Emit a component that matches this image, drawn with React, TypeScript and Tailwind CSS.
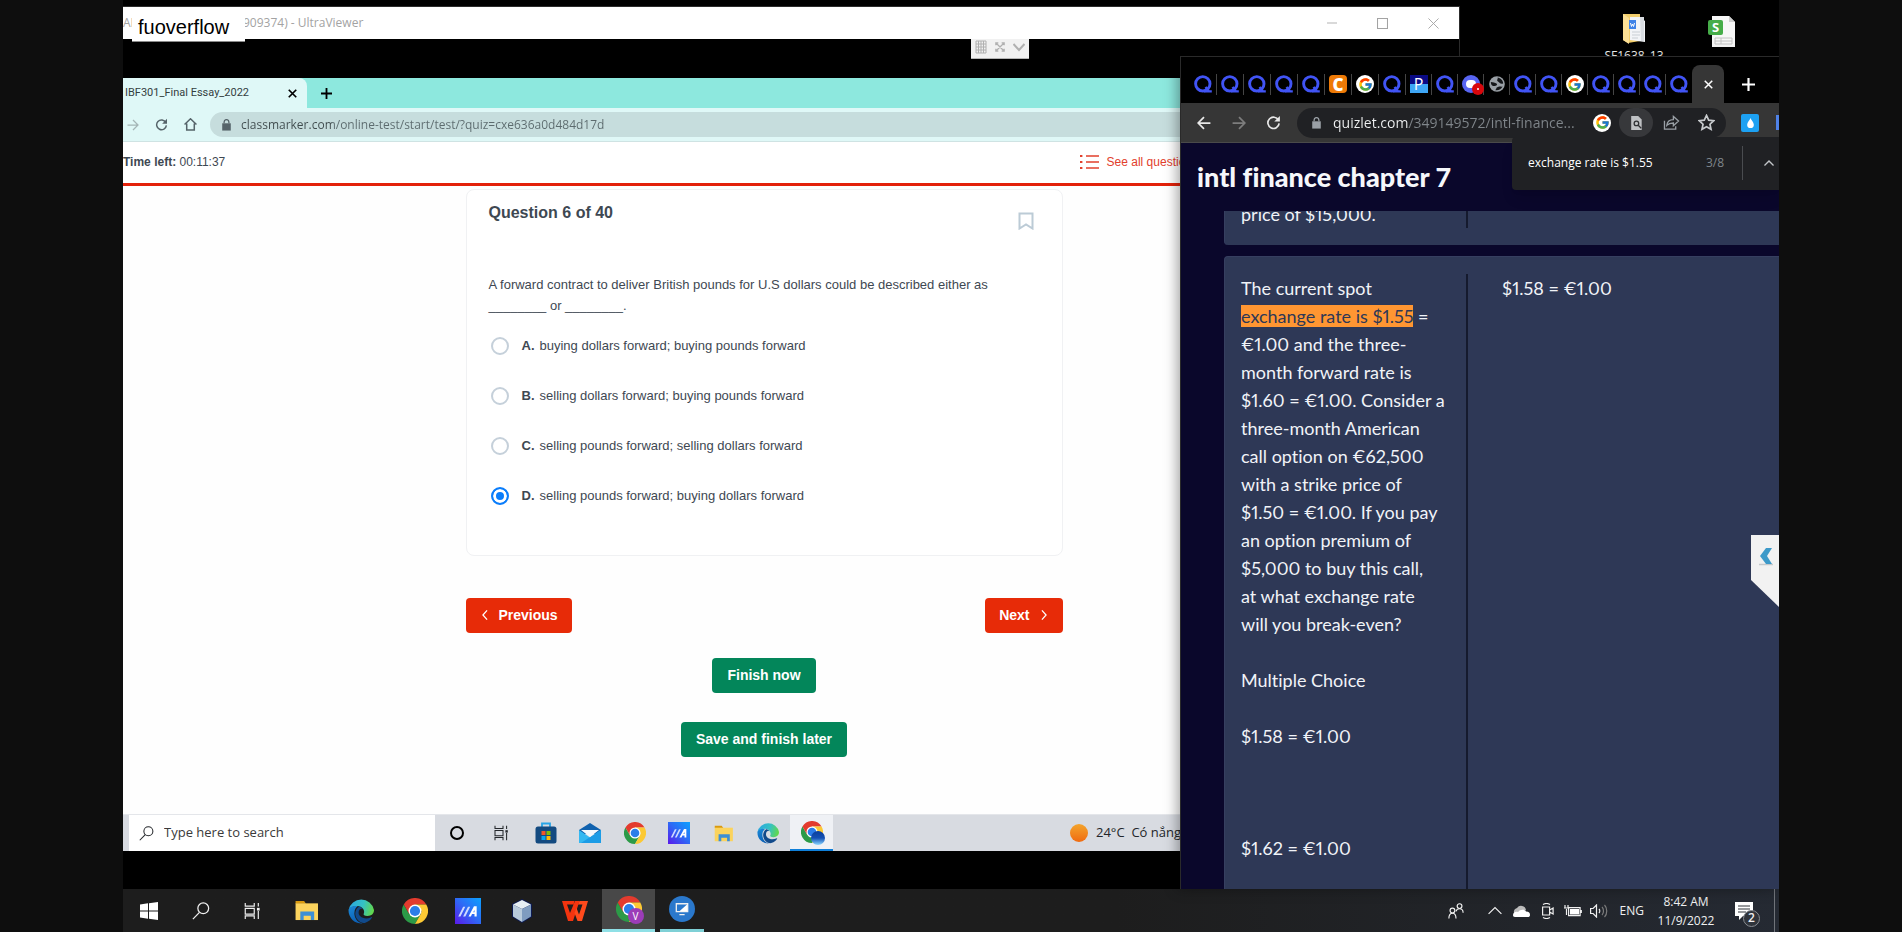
import type { ReactNode } from "react";
import { FcGoogle } from "react-icons/fc";

const ui = "font-['Open_Sans','Noto_Sans',sans-serif]";

function Icon({ size = "size-4", box = "0 0 24 24", children }: { size?: string; box?: string; children: ReactNode }) {
  return (
    <svg viewBox={box} className={`${size} shrink-0`} fill="none" stroke="currentColor" strokeWidth="2" aria-hidden="true">
      {children}
    </svg>
  );
}

function ChromeLogo({ size, badge }: { size: string; badge?: "v" | "edge" }) {
  return (
    <span className="relative flex">
      <svg viewBox="0 0 48 48" className={`${size} shrink-0`} aria-hidden="true">
        <path d="M24 24 3.2 12A24 24 0 0 1 44.8 12L24 12Z" fill="#e33b2e" />
        <path d="M3.2 12A24 24 0 0 0 24 48L34.4 30 24 24 13.6 30Z" fill="#2c9a47" />
        <path d="M44.8 12A24 24 0 0 1 24 48L34.4 30 36 24 24 12Z" fill="#fcc934" />
        <path d="M3.2 12 13.6 30 14 22 24 12Z" fill="#e33b2e" />
        <circle cx="24" cy="24" r="12" fill="#fff" />
        <circle cx="24" cy="24" r="9.4" fill="#2b7de9" />
      </svg>
      {badge === "v" && (
        <span className="absolute -right-0.5 -bottom-0.5 flex size-4 items-center justify-center rounded-full bg-[#9c3cb8] text-[10px] leading-none text-white">V</span>
      )}
      {badge === "edge" && <span className="absolute -right-0.5 -bottom-0.5 size-3.5 rounded-full bg-linear-to-b from-[#0b3f9c] via-[#1450b4] to-[#8fd8ff]" />}
    </span>
  );
}

function EdgeLogo({ size, id }: { size: string; id: string }) {
  return (
    <svg viewBox="0 0 48 48" className={size} aria-hidden="true">
      <defs>
        <linearGradient id={`${id}-top`} x1="0" x2="1" y1="0.3" y2="0.5">
          <stop offset="0" stopColor="#2aa8e0" />
          <stop offset="0.55" stopColor="#35c1c4" />
          <stop offset="1" stopColor="#62d84c" />
        </linearGradient>
        <linearGradient id={`${id}-low`} x1="0" x2="0.4" y1="0" y2="1">
          <stop offset="0" stopColor="#1b8ad8" />
          <stop offset="1" stopColor="#0c5fb4" />
        </linearGradient>
      </defs>
      <path d="M1 22A24 24 0 0 1 48 22C48 29 43 33 36 33 30 33 28 31 29 29 31 26 30 17 20 15 11 14 3 18 1 22Z" fill={`url(#${id}-top)`} />
      <path d="M1 22C3 15 12 14 18 15 14 17 11 23 12 31 13 40 20 46 27 47A24 24 0 0 1 1 22Z" fill={`url(#${id}-low)`} />
      <path d="M20 16C14 20 11 29 16 38 20 45 28 47 31 46 38 44 43 39 44 36 44 35 43 35 42 36 30 41 17 34 20 24 21 20 24 19 27 20 25 17 22 16 20 16Z" fill="#114a8b" />
    </svg>
  );
}

function FolderLogo({ size }: { size: string }) {
  return (
    <svg viewBox="0 0 24 22" className={size} aria-hidden="true">
      <path d="M0 1h9l2 3H0Z" fill="#d99a10" />
      <path d="M0 3.500h23.500V21H0Z" fill="#fbd35d" />
      <path d="M5 12h14.500v9H16v-4.500h-7.500V21H5Z" fill="#3c8fd6" />
    </svg>
  );
}

function AsusLogo({ size, id }: { size: string; id: string }) {
  return (
    <svg viewBox="0 0 24 24" className={size} aria-hidden="true">
      <defs>
        <linearGradient id={id} x1="0" x2="1" y1="1" y2="0">
          <stop offset="0" stopColor="#5a18ea" />
          <stop offset="0.5" stopColor="#2f68f5" />
          <stop offset="1" stopColor="#0ba2ff" />
        </linearGradient>
      </defs>
      <path d="M0 0h24v24H0Z" fill={`url(#${id})`} />
      <path d="M3 17 7.500 8h2l-4.500 9ZM7.500 17 12 8h2l-4.500 9Z" fill="#cfdaff" />
      <path d="M12.500 17l5-9.500H20V17h-2v-2.300h-2.300L14.700 17ZM16.800 13.200H18V11Z" fill="#fff" fillRule="evenodd" />
    </svg>
  );
}

function TaskViewIcon({ size }: { size: string }) {
  return (
    <Icon size={size} box="0 0 20 20">
      <path strokeWidth="1.300" d="M2.500 1v3.500h10V1M2.500 7h10v6.500h-10zM2.500 19v-3.500h10V19M17 1v4M17 10v9" />
      <path strokeWidth="3" d="M17 6.500v3" />
    </Icon>
  );
}

function SearchIcon({ size }: { size: string }) {
  return (
    <Icon size={size} box="0 0 20 20">
      <circle cx="12.500" cy="7" r="6" strokeWidth="1.400" />
      <path strokeWidth="1.400" d="M8.300 11.500 1 19" />
    </Icon>
  );
}

function LockIcon() {
  return (
    <svg viewBox="0 0 10 14" className="h-3 w-[9px] shrink-0" fill="currentColor" aria-hidden="true">
      <path d="M0 5h10v8.500H0z" />
      <path d="M2.200 5V3.500a2.800 2.800 0 0 1 5.600 0V5" fill="none" stroke="currentColor" strokeWidth="1.500" />
    </svg>
  );
}

function ReloadIcon({ size }: { size: string }) {
  return (
    <Icon size={size} box="0 0 16 16">
      <path strokeWidth="1.800" d="M13.300 5.500A6 6 0 1 0 14 9" />
      <path d="M14.800 1v6H8.800Z" fill="currentColor" stroke="none" />
    </Icon>
  );
}

function QuizletMark() {
  return (
    <Icon size="h-[18px] w-[18px]" box="0 0 18 18">
      <circle cx="8.800" cy="8.800" r="7.200" stroke="#4154f5" strokeWidth="2.900" />
      <path d="M11.500 12 15 16.500M10 16.400h7.800" stroke="#4154f5" strokeWidth="2.400" />
    </Icon>
  );
}

function Favicon({ kind }: { kind: string }) {
  if (kind === "g")
    return (
      <span className="flex size-[18px] items-center justify-center rounded-full bg-white">
        <FcGoogle size={15} />
      </span>
    );
  if (kind === "c")
    return <span className="flex size-[18px] items-center justify-center rounded-sm bg-[#ee7a06] text-[17px] leading-none font-black text-white">C</span>;
  if (kind === "p")
    return <span className="flex size-[18px] items-center justify-center bg-linear-to-b from-[#0a0a85] from-50% to-[#3ea6f5] to-50% text-base leading-none text-white">P</span>;
  if (kind === "d")
    return (
      <span className="relative flex size-[18px] items-center justify-center rounded-full bg-[#5865f2]">
        <span className="h-2 w-2.5 rounded-full bg-white" />
        <span className="absolute -right-1 -bottom-0.5 flex size-3 items-center justify-center rounded-full bg-[#d8070c]">
          <span className="size-0.5 rounded-full bg-white" />
        </span>
      </span>
    );
  if (kind === "w")
    return (
      <svg viewBox="0 0 16 16" className="size-4" aria-hidden="true">
        <circle cx="8" cy="8" r="7.800" fill="#9aa0a6" />
        <path d="M1.800 6C4 6.500 6 6.500 7.500 7.500 9 9 7 10.500 4 10 3 9.500 2 9 1.800 6ZM8.500 1.500C9.500 3 7 4 9 5.500 11 6.500 11 8.500 14.200 7.500 14 4 11.500 2 8.500 1.500ZM6 14C8 13.500 6.500 11.500 9 11 11 10 12 11 13.500 10.500 12.500 13 9 15 6 14Z" fill="#15171a" />
      </svg>
    );
  return <QuizletMark />;
}

const tabs = ["q", "q", "q", "q", "q", "c", "g", "q", "p", "q", "d", "w", "q", "q", "g", "q", "q", "q", "q"];

const options = [
  { key: "A", text: "buying dollars forward; buying pounds forward" },
  { key: "B", text: "selling dollars forward; buying pounds forward" },
  { key: "C", text: "selling pounds forward; selling dollars forward" },
  { key: "D", text: "selling pounds forward; buying dollars forward" },
];

function RemoteBrowser() {
  return (
    <>
      <div className="flex h-[30px] bg-[#8de8de]">
        <div className="flex w-[184px] items-center justify-between rounded-tr-lg bg-[#dff8f7] pr-2.5 pl-0.5 font-['Roboto',sans-serif] text-[11px] text-[#34403f]">
          <span className="whitespace-nowrap">IBF301_Final Essay_2022</span>
          <button aria-label="Close tab" className="text-black">
            <Icon size="size-[9px]"><path strokeWidth="4.500" d="M2 2 22 22M22 2 2 22" /></Icon>
          </button>
        </div>
        <button aria-label="New tab" className="ml-3.5 text-black">
          <Icon size="size-[11px]"><path strokeWidth="4" d="M12 0v24M0 12h24" /></Icon>
        </button>
      </div>
      <div className="flex h-[34px] items-center border-b border-[#cfe3e3] bg-[#dff8f7] pl-1 text-[#56646a]">
        <button aria-label="Forward" className="text-[#a4b5b6]">
          <Icon size="size-3"><path strokeWidth="2.500" d="M1 12h21M12 2l10 10-10 10" /></Icon>
        </button>
        <button aria-label="Reload" className="ml-4"><ReloadIcon size="size-[13px]" /></button>
        <button aria-label="Home" className="ml-4">
          <Icon size="size-[13px]"><path strokeWidth="2.800" d="M1 12 12 1.500 23 12M5 10v12h14V10" /></Icon>
        </button>
        <div className="ml-[13px] flex h-[25px] flex-1 items-center gap-2.5 rounded-l-full bg-[#c6dddd] pl-3">
          <LockIcon />
          <input
            aria-label="Address"
            defaultValue="classmarker.com/online-test/start/test/?quiz=cxe636a0d484d17d"
            className="w-full bg-[linear-gradient(to_right,#3f4b4d_91px,#5c6b6e_91px)] bg-clip-text text-xs text-transparent outline-none"
          />
        </div>
      </div>
    </>
  );
}

function QuizPage() {
  return (
    <div className="min-h-0 flex-1 bg-[#fefefe] font-['Liberation_Sans',Arial,sans-serif] text-[13px] text-[#3e4852]">
      <header className="flex h-11 items-center justify-between border-b-3 border-[#e3210a] bg-white pr-[207px] pb-0.5 text-xs">
        <p className="leading-4"><b>Time left:</b> 00:11:37</p>
        <a href="#questions" className="flex items-center gap-2 text-[#e2402c]">
          <Icon size="h-4 w-[19px]" box="0 0 19 16">
            <path strokeWidth="1.500" d="M6 2h13M6 8h13M6 14h13" />
            <path strokeWidth="2.200" d="M0 2h2.400M0 8h2.400M0 14h2.400" />
          </Icon>
          See all questions
        </a>
      </header>
      <main className="mx-auto mt-[3px] w-[597px]">
        <section className="h-[367px] rounded-lg border border-[#f0f1f3] bg-white px-[22px] pt-3.5">
          <div className="flex items-start justify-between pr-1.5">
            <h1 className="text-base leading-[18px] font-bold">Question 6 of 40</h1>
            <button aria-label="Bookmark question" className="mt-2 text-[#bccbd6]">
              <Icon size="h-[18px] w-4" box="0 0 16 18"><path d="M1.500 1.500h13v15L8 12.500 1.500 16.500Z" /></Icon>
            </button>
          </div>
          <p className="mt-11 leading-[21px]">
            A forward contract to deliver British pounds for U.S dollars could be described either as<br />
            ________ or ________.
          </p>
          <div className="mt-[9px] flex flex-col gap-2">
            {options.map((o) => (
              <label key={o.key} className="flex h-[42px] items-center">
                <input
                  type="radio"
                  name="answer"
                  defaultChecked={o.key === "D"}
                  className="ml-0.5 size-[18px] appearance-none rounded-full border-2 border-[#c5d0da] bg-white checked:border-[#0a7dfb] checked:bg-[#0a7dfb] checked:shadow-[inset_0_0_0_3px_white]"
                />
                <b className="ml-[13px]">{o.key}.</b>
                <span className="ml-[5px]">{o.text}</span>
              </label>
            ))}
          </div>
        </section>
        <div className="mt-[42px] flex justify-between text-sm font-bold text-white">
          <button className="flex h-[35px] items-center gap-[9px] rounded-sm bg-[#e72b08] px-3.5 pb-0.5">
            <Icon size="size-2.5"><path strokeWidth="3" d="M17 1 7 12l10 11" /></Icon>
            Previous
          </button>
          <button className="flex h-[35px] items-center gap-[9px] rounded-sm bg-[#e72b08] px-3.5 pb-0.5">
            Next
            <Icon size="size-2.5"><path strokeWidth="3" d="m7 1 10 11L7 23" /></Icon>
          </button>
        </div>
        <div className="mt-[25px] flex flex-col items-center gap-[29px] text-sm font-bold text-white">
          <button className="h-[35px] rounded-sm bg-[#03865a] px-[15px] pb-0.5">Finish now</button>
          <button className="h-[35px] rounded-sm bg-[#03865a] px-[15px] pb-0.5">Save and finish later</button>
        </div>
      </main>
    </div>
  );
}

function RemoteTaskbar() {
  return (
    <div className="flex h-[37px] border-t border-[#e4e6ea] bg-[#d8dbe1] pl-1.5 text-[#23262a]">
      <label className="flex w-[306px] items-center gap-2.5 bg-white pl-2.5">
        <SearchIcon size="size-[15px]" />
        <input aria-label="Search" placeholder="Type here to search" className="w-full text-[13px] outline-none placeholder:text-[#3a3a3a]" />
      </label>
      <div className="flex">
        <button aria-label="Cortana" className="flex w-11 items-center justify-center"><span className="size-3.5 rounded-full border-2 border-black" /></button>
        <button aria-label="Task view" className="flex w-11 items-center justify-center"><TaskViewIcon size="size-4" /></button>
        <button aria-label="Store" className="flex w-[45px] items-center justify-center">
          <svg viewBox="0 0 22 22" className="size-[22px]" aria-hidden="true">
            <path d="M7 6V1.500h8V6" fill="none" stroke="#27a5e8" strokeWidth="1.800" />
            <rect x="0.500" y="4.500" width="21" height="17" rx="2.500" fill="#134a80" />
            <path d="M6.500 9h4v4h-4z" fill="#f35426" /><path d="M11.500 9h4v4h-4z" fill="#81bc06" />
            <path d="M6.500 14h4v4h-4z" fill="#05a6f0" /><path d="M11.500 14h4v4h-4z" fill="#ffba08" />
          </svg>
        </button>
        <button aria-label="Mail" className="flex w-11 items-center justify-center">
          <svg viewBox="0 0 22 20" className="h-5 w-[22px]" aria-hidden="true">
            <path d="M0 7 11 0l11 7v4H0Z" fill="#1062ae" /><path d="M0 7v13h22V7L11 14.500Z" fill="#35b8f1" />
            <path d="M22 7v13H2Z" fill="#1c9ce6" /><path d="M2 7h18l-9 7Z" fill="#f4f8fc" />
          </svg>
        </button>
        <button aria-label="Chrome" className="flex w-[45px] items-center justify-center"><ChromeLogo size="size-[22px]" /></button>
        <button aria-label="MyASUS" className="flex w-11 items-center justify-center"><AsusLogo size="size-[22px]" id="asus-remote" /></button>
        <button aria-label="File Explorer" className="flex w-[45px] items-center justify-center"><FolderLogo size="h-[17px] w-5" /></button>
        <button aria-label="Edge" className="flex w-11 items-center justify-center"><EdgeLogo size="size-[22px]" id="edge-remote" /></button>
        <button aria-label="Chrome, active" className="flex w-[43px] items-center justify-center border-b-2 border-[#0f7fd9] bg-[#eff1f5]"><ChromeLogo size="size-[22px]" badge="edge" /></button>
      </div>
      <div className="ml-auto flex items-center gap-2 pr-[224px] text-[13px] whitespace-nowrap">
        <span className="size-[18px] rounded-full bg-linear-to-b from-[#f3a42c] to-[#ef6a10]" />
        <span>24°C&nbsp; Có nắng</span>
      </div>
    </div>
  );
}

function UltraViewer() {
  return (
    <section className="absolute top-1.5 bottom-0 left-0 flex w-[1337px] flex-col border-t border-r border-[#2c2c2c] bg-black">
      <div className="relative flex h-8 items-center bg-white text-xs text-[#a3a3a3]">
        <span className="w-[9px] overflow-hidden whitespace-nowrap">AI</span>
        <span className="ml-[111px]">909374) - UltraViewer</span>
        <div className="mr-5 ml-auto flex items-center gap-10">
          <button aria-label="Minimize"><Icon size="size-2.5"><path d="M0 12h24" /></Icon></button>
          <button aria-label="Maximize"><Icon size="size-[11px]"><path strokeWidth="2.500" d="M1 1h22v22H1z" /></Icon></button>
          <button aria-label="Close"><Icon size="size-[11px]"><path d="M1 1 23 23M23 1 1 23" /></Icon></button>
        </div>
        <div className="absolute top-0 left-[9px] flex h-[35px] w-[113px] items-center border-b border-[#8a8a8a] bg-white pt-1.5 pl-1.5 font-['Liberation_Sans',Arial,sans-serif] text-xl text-black">fuoverflow</div>
        <div className="absolute top-8 left-[848px] flex h-5 w-[58px] items-center justify-around border-b border-[#b5b5b5] bg-[#f1f1f1] pb-1 text-[#b0b0b0]">
          <Icon size="h-3.5 w-3" box="0 0 12 14"><path strokeWidth="1" d="M1 1h10v12H1zM3.500 1v12M6 1v12M8.500 1v12M1 4h10M1 7h10M1 10h10" /></Icon>
          <Icon size="size-2.5"><path strokeWidth="3" d="M2 8V2h6M16 2h6v6M22 16v6h-6M8 22H2v-6M3 3l18 18M21 3 3 21" /></Icon>
          <Icon size="size-3"><path strokeWidth="4" d="M1 6l11 12L23 6" /></Icon>
        </div>
      </div>
      <div className="mt-[39px] mr-[54px] mb-[38px] flex flex-1 flex-col">
        <RemoteBrowser />
        <QuizPage />
        <RemoteTaskbar />
      </div>
    </section>
  );
}

function QuizletWindow() {
  return (
    <section className="absolute top-14 right-0 bottom-0 flex w-[599px] flex-col overflow-hidden border-t border-l border-[#2a2a2a] bg-[#0a072b] shadow-[-3px_0_12px_rgba(0,0,0,0.35)]">
      <div className="flex h-[46px] items-center bg-black pt-2 pl-[9px]">
        {tabs.map((t, i) => (
          <button
            key={i}
            aria-label={`Tab ${i + 1}`}
            className={`flex h-[21px] items-center justify-center ${i < 18 ? "border-r border-[#454545]" : ""} ${i < 8 ? "w-[27px]" : "w-[26px]"}`}
          >
            <Favicon kind={t} />
          </button>
        ))}
        <div className="flex h-[38px] w-8 items-center justify-center rounded-t-lg bg-[#363636] text-white">
          <button aria-label="Close tab"><Icon size="size-[9px]"><path strokeWidth="4" d="M2 2 22 22M22 2 2 22" /></Icon></button>
        </div>
        <button aria-label="New tab" className="ml-[18px] text-white"><Icon size="size-[13px]"><path strokeWidth="4" d="M12 0v24M0 12h24" /></Icon></button>
      </div>
      <div className="flex h-[39px] shrink-0 items-center bg-[#363636] pl-4 text-[#e8e8e8]">
        <button aria-label="Back"><Icon size="size-3.5"><path strokeWidth="3" d="M23 12H2M12 2 2 12l10 10" /></Icon></button>
        <button aria-label="Forward" className="ml-[21px] text-[#7d7d7d]"><Icon size="size-3.5"><path strokeWidth="3" d="M1 12h21M12 2l10 10-10 10" /></Icon></button>
        <button aria-label="Reload" className="ml-5"><ReloadIcon size="size-[15px]" /></button>
        <div className="ml-4 flex h-[30px] w-[429px] items-center rounded-full bg-[#202124] pr-[11px] pl-[15px] text-[#9aa0a6]">
          <LockIcon />
          <input
            aria-label="Address"
            defaultValue="quizlet.com/349149572/intl-finance..."
            className="ml-3 min-w-0 flex-1 bg-[linear-gradient(to_right,#f1f3f4_76px,#80868b_76px)] bg-clip-text text-sm text-transparent outline-none"
          />
          <span className="flex size-[18px] items-center justify-center rounded-full bg-white"><FcGoogle size={15} /></span>
          <button aria-label="Find in page" className="ml-2 flex h-[29px] w-[34px] items-center justify-center rounded-full bg-[#37383b] text-[#bfc1c4]">
            <svg viewBox="0 0 13 16" className="h-3.5 w-3" aria-hidden="true">
              <path d="M1 0h8l4 4v12H1Z" fill="currentColor" />
              <circle cx="7" cy="8.500" r="2.600" fill="none" stroke="#303134" strokeWidth="1.500" /><path d="m9 10.500 3.500 3.500" stroke="#303134" strokeWidth="1.500" />
            </svg>
          </button>
          <button aria-label="Share" className="ml-2.5">
            <Icon size="h-[15px] w-[17px]" box="0 0 17 16"><path strokeWidth="1.400" d="M1 6v9h12v-3M3.500 11C4 7 7 5 10.500 5V1.500L16 6.500l-5.500 5V8.500C7.500 8.500 5.500 9 3.500 11Z" /></Icon>
          </button>
          <button aria-label="Bookmark" className="ml-[18px] text-[#c7cacd]">
            <Icon size="size-[17px]"><path strokeWidth="2.400" d="m12 2 3.100 6.700 7.100.8-5.300 4.900 1.500 7.200L12 18l-6.400 3.600 1.500-7.200L1.800 9.500l7.100-.8Z" /></Icon>
          </button>
        </div>
        <span className="ml-[15px] flex size-[18px] shrink-0 items-center justify-center rounded-xs bg-[#1da1f2]">
          <svg viewBox="0 0 8 12" className="h-2.5 w-[7px]" aria-hidden="true"><path d="M4 0C5 3 8 5 8 8a4 4 0 0 1-8 0C0 5 3 3 4 0Z" fill="#fff" /></svg>
        </span>
        <span className="ml-auto h-[15px] w-[3px] shrink-0 bg-[#4f82e8]" />
      </div>
      <header className="relative flex h-[69px] shrink-0 items-center border-t border-[#4a4a4a] px-4">
        <h2 className="font-['Lato',sans-serif] text-[27px] font-black whitespace-nowrap text-[#f6f7fb] [font-variant-ligatures:none]">intl finance chapter 7</h2>
        <div role="search" className="absolute -top-1.5 right-0 flex h-[53px] w-[267px] items-center rounded-l-sm bg-[#202124] pb-0.5 pl-4 text-xs text-white shadow-lg">
          <input aria-label="Find" defaultValue="exchange rate is $1.55" className="w-[178px] outline-none" />
          <span className="text-[#7f868c]">3/8</span>
          <span className="ml-[18px] h-[34px] w-px bg-[#4a4c50]" />
          <button aria-label="Previous match" className="ml-[21px] text-[#c4c7ca]"><Icon size="size-2.5"><path strokeWidth="3.500" d="m1 18 11-11 11 11" /></Icon></button>
        </div>
      </header>
      <div className="flex min-h-0 flex-1 flex-col gap-[11px] overflow-hidden pl-[43px] font-['Lato',sans-serif] text-[18px] leading-7 text-[#f1f3f8] proportional-nums [font-variant-ligatures:none]">
        <article className="flex h-[34px] shrink-0 rounded-bl border-l border-[#363f60] bg-[#2e3856] pl-4">
          <p className="-mt-[11px] w-[225px]">price of $15,000.</p>
          <span className="h-[17px] w-[2px] bg-[#151a2e]" />
        </article>
        <article className="flex flex-1 rounded-tl border-t border-l border-[#363f60] bg-[#2e3856] pt-[17px] pl-4">
          <div className="w-[225px] shrink-0 whitespace-nowrap">
            <p>
              The current spot<br />
              <mark className="bg-[#ff9632] text-[#2e3856]">exchange rate is $1.55</mark> =<br />
              €1.00 and the three-<br />month forward rate is<br />$1.60 = €1.00. Consider a<br />three-month American<br />call option on €62,500<br />with a strike price of<br />$1.50 = €1.00. If you pay<br />an option premium of<br />$5,000 to buy this call,<br />at what exchange rate<br />will you break-even?
            </p>
            <p className="mt-7">Multiple Choice</p>
            <p className="mt-7">$1.58 = €1.00</p>
            <p className="mt-[84px]">$1.62 = €1.00</p>
          </div>
          <span className="w-[2px] shrink-0 bg-[#151a2e]" />
          <p className="ml-[34px]">$1.58 = €1.00</p>
        </article>
      </div>
      <button aria-label="Show panel" className="absolute top-[478px] right-0">
        <svg viewBox="0 0 28 72" className="h-[72px] w-7" aria-hidden="true">
          <path d="M0 0h28v72L0 45Z" fill="#f2f2f2" />
          <path d="M8 29.500h14" stroke="#c5c9cc" strokeWidth="1.500" />
          <path d="M15 13h6l-5 8 5 8h-6L9 21Z" fill="#3d9ac9" />
        </svg>
      </button>
    </section>
  );
}

function HostTaskbar() {
  return (
    <footer className="flex h-[43px] shrink-0 items-stretch bg-linear-to-r from-[#1d1d1d] from-60% to-[#252a33] text-[#f0f0f0]">
      <button aria-label="Start" className="flex w-[52px] items-center justify-center">
        <svg viewBox="0 0 18 18" className="size-[18px]" fill="#fff" aria-hidden="true"><path d="M0 2.500 8 1.300v7.200H0ZM9 1.200 18 0v8.500H9ZM0 9.500h8v7.200L0 15.500ZM9 9.500h9V18l-9-1.200Z" /></svg>
      </button>
      <button aria-label="Search" className="flex w-[51px] items-center justify-center"><SearchIcon size="size-[18px]" /></button>
      <button aria-label="Task view" className="mr-[3px] flex w-[51px] items-center justify-center"><TaskViewIcon size="size-[18px]" /></button>
      <button aria-label="File Explorer" className="flex w-[54px] items-center justify-center"><FolderLogo size="h-[21px] w-6" /></button>
      <button aria-label="Edge" className="flex w-[54px] items-center justify-center"><EdgeLogo size="size-[26px]" id="edge-host" /></button>
      <button aria-label="Chrome" className="flex w-[53px] items-center justify-center"><ChromeLogo size="size-[26px]" /></button>
      <button aria-label="MyASUS" className="flex w-[54px] items-center justify-center"><AsusLogo size="size-[26px]" id="asus-host" /></button>
      <button aria-label="VirtualBox" className="flex w-[53px] items-center justify-center">
        <svg viewBox="0 0 24 26" className="h-[26px] w-6" aria-hidden="true">
          <path d="M12 1 22 6v13l-10 6L2 19V6Z" fill="#0d1a52" /><path d="M12 2 21 6.500 12 11 3 6.500Z" fill="#e6eef3" />
          <path d="M3 6.500 12 11v13L3 18.500Z" fill="#b9cbdc" /><path d="M21 6.500 12 11v13l9-5.500Z" fill="#7f9cc0" />
        </svg>
      </button>
      <button aria-label="WPS Office" className="flex w-[54px] items-center justify-center">
        <svg viewBox="0 0 26 20" className="h-5 w-[26px]" aria-hidden="true">
          <path d="M0 0h12.500l-1 3.500H5L8 12 13 0h4.500L11 20H6Z" fill="#f3340f" />
          <path d="M16 3.500 17.500 0H26l-6 20h-4.500L12.500 12 14.500 7l2.500 6.500 3.500-10Z" fill="#ff4a1c" />
        </svg>
      </button>
      <button aria-label="Chrome, active" className="flex w-[53px] items-center justify-center border-b-3 border-[#8fe0e6] bg-[#484848]"><ChromeLogo size="size-[26px]" badge="v" /></button>
      <button aria-label="UltraViewer" className="ml-[5px] flex w-11 items-center justify-center border-b-3 border-[#7fd0d6]">
        <span className="flex size-[26px] items-center justify-center rounded-full bg-[#2a78cc]">
          <Icon size="size-3.5" box="0 0 16 16"><path strokeWidth="1.500" d="M1.500 2h13v9h-13zM5 14.500h6" /><path d="M14 2.500v8L5 10.500Z" fill="#fff" stroke="none" /></Icon>
        </span>
      </button>
      <div className="ml-auto flex items-center">
        <button aria-label="Meet now"><Icon size="size-4" box="0 0 18 18"><path strokeWidth="1.300" d="M1 17.500c0-4 1.500-6 4-6s4 2 4 6M9 9.500c.5-2 2-3 4-3s4 1.500 4 4.500" /><circle cx="5" cy="8.500" r="2.700" strokeWidth="1.300" /><circle cx="13" cy="3.500" r="2.700" strokeWidth="1.300" /></Icon></button>
        <button aria-label="Show hidden icons" className="ml-6"><Icon size="size-3.5"><path d="m1 17 11-11 11 11" /></Icon></button>
        <span className="ml-2.5"><Icon size="h-3 w-[18px]" box="0 0 18 12"><path stroke="none" fill="#bbb" d="M2 8A4 4 0 0 1 5 3a5 5 0 0 1 9 2Z" /><path stroke="none" fill="#fff" d="M1 10c0-3 3-4 5-3 2-3 7-3 8-.500 3 0 4 1.500 4 3.500 0 1.500-1 2-2 2H3c-1.500 0-2-1-2-2Z" /></Icon></span>
        <span className="ml-3"><Icon size="h-4 w-3" box="0 0 12 16"><path strokeWidth="1.200" d="M.6 4h7v8h-7zM7.600 7l3.500-2v6L7.600 9M1 1.500c2-1.200 5-1.200 7 0M1 14.500c2 1.200 5 1.200 7 0" /></Icon></span>
        <span className="ml-2.5"><Icon size="h-3 w-[18px]" box="0 0 18 12"><path strokeWidth="1.200" d="M4.600 2.600h11.500v8H4.600zM17.300 5v3M1 0v3M4 0v3M0 3h5M2.500 4v6" /><path stroke="none" fill="#fff" d="M6 4h9v5.500H6z" /></Icon></span>
        <span className="ml-2"><Icon size="h-3.5 w-[18px]" box="0 0 18 14"><path strokeWidth="1.200" d="M.6 4.500h2.500L6.500 1v12L3.100 9.500H.6Z" /><path strokeWidth="1.200" d="M9 5c1 1 1 3 0 4" /><path stroke="#7c7c7c" strokeWidth="1.200" d="M12 3c2 2 2 6 0 8M14.500 1c3 3 3 9 0 12" /></Icon></span>
        <span className="ml-3 text-xs">ENG</span>
        <p className="ml-3 w-[60px] text-center text-xs leading-[19px]">8:42 AM<br />11/9/2022</p>
        <button aria-label="Notifications" className="relative ml-[19px] flex w-[29px]">
          <svg viewBox="0 0 18 18" className="size-[18px]" aria-hidden="true"><path d="M0 0h18v14h-10l-4 4v-4H0Z" fill="#fff" /><path d="M3 4h12M3 7h12M3 10h8" stroke="#30343b" strokeWidth="1.200" /></svg>
          <span className="absolute top-2 left-2 flex size-[17px] items-center justify-center rounded-full border border-[#8a8d92] bg-[#30343b] text-xs font-semibold">2</span>
        </button>
        <span className="mr-1 ml-2.5 h-[43px] w-px bg-[#70747a]" />
      </div>
    </footer>
  );
}

export default function App() {
  return (
    <div className={`flex min-h-screen bg-[#0e0e0e] px-[123px] ${ui}`}>
      <div className="flex min-w-0 flex-1 flex-col overflow-hidden bg-black">
        <div className="relative flex-1">
          <div className="absolute top-3.5 right-[30px] flex items-start gap-[34px] text-xs text-white">
            <div className="flex w-20 flex-col items-center gap-1 whitespace-nowrap">
              <svg viewBox="0 0 24 30" className="h-[30px] w-6" aria-hidden="true">
                <path d="M1 0h17v27L6 29 1 26Z" fill="#f3ce6c" /><path d="M8 3h10l5 4v21L8 26Z" fill="#f2f4f7" />
                <path d="M18 3h4v24h-3Z" fill="#d9dde2" /><path d="M7 6h7v9H7Z" fill="#3f83e8" /><path d="m8.500 9 1 3.500 1-2.500 1 2.500 1-3.500" stroke="#fff" fill="none" />
                <path d="M10 18h8M10 21h8M10 24h6" stroke="#c9ced4" /><path d="M1 0 7 4v26L1 26Z" fill="#fde095" />
              </svg>
              <span>SF1638_13</span>
            </div>
            <div className="relative mt-0.5 mr-3.5 h-[31px] w-[27px]">
              <svg viewBox="0 0 27 31" className="h-full w-full" aria-hidden="true">
                <path d="M4 0h17l6 6v25H4Z" fill="#f7f7f7" /><path d="M21 0v6h6Z" fill="#cfcfcf" /><path d="M7 22h17v6H7zM7 25h17M13 22v6" fill="none" stroke="#c4c4c4" />
              </svg>
              <span className="absolute top-1 left-0 flex size-[15px] items-center justify-center rounded-xs bg-[#46ad49] text-[13px] leading-none font-bold">S</span>
            </div>
          </div>
          <UltraViewer />
          <QuizletWindow />
        </div>
        <HostTaskbar />
      </div>
    </div>
  );
}
